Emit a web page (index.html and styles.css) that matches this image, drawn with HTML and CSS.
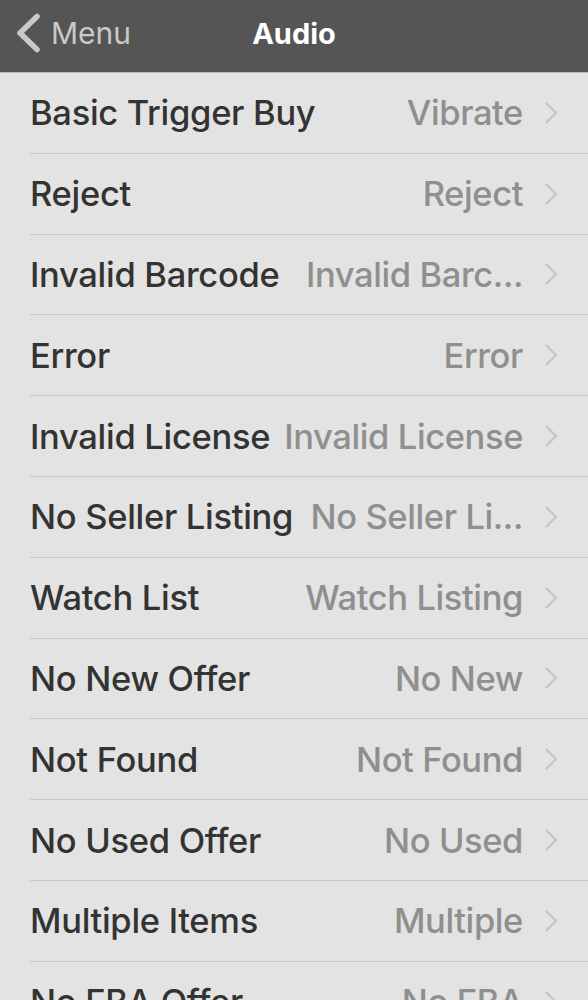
FILE: index.html
```html
<!DOCTYPE html>
<html lang="en">
<head>
    <meta charset="UTF-8">
    <meta name="viewport" content="width=device-width, initial-scale=1.0">
    <title>Audio</title>
    <link rel="stylesheet" href="styles.css">
</head>
<body>
    <div class="navbar">
        <a class="back" href="#">
            <svg class="back-icon" viewBox="0 0 26 40" width="26" height="40">
                <path d="M22 3.5 L5 20 L22 36.5" fill="none" stroke="currentColor" stroke-width="5.5" stroke-linecap="round" stroke-linejoin="round"/>
            </svg>
            <span>Menu</span>
        </a>
        <h1 class="title">Audio</h1>
    </div>

    <ul class="list">
        <li class="row"><span class="label">Basic Trigger Buy</span><span class="value">Vibrate</span><svg class="chevron" viewBox="0 0 14 22" width="14" height="22"><path d="M2 1 L12 11 L2 21" fill="none" stroke="currentColor" stroke-width="2"/></svg></li>
        <li class="row"><span class="label">Reject</span><span class="value">Reject</span><svg class="chevron" viewBox="0 0 14 22" width="14" height="22"><path d="M2 1 L12 11 L2 21" fill="none" stroke="currentColor" stroke-width="2"/></svg></li>
        <li class="row"><span class="label">Invalid Barcode</span><span class="value">Invalid Barc...</span><svg class="chevron" viewBox="0 0 14 22" width="14" height="22"><path d="M2 1 L12 11 L2 21" fill="none" stroke="currentColor" stroke-width="2"/></svg></li>
        <li class="row"><span class="label">Error</span><span class="value">Error</span><svg class="chevron" viewBox="0 0 14 22" width="14" height="22"><path d="M2 1 L12 11 L2 21" fill="none" stroke="currentColor" stroke-width="2"/></svg></li>
        <li class="row"><span class="label">Invalid License</span><span class="value">Invalid License</span><svg class="chevron" viewBox="0 0 14 22" width="14" height="22"><path d="M2 1 L12 11 L2 21" fill="none" stroke="currentColor" stroke-width="2"/></svg></li>
        <li class="row"><span class="label">No Seller Listing</span><span class="value">No Seller Li...</span><svg class="chevron" viewBox="0 0 14 22" width="14" height="22"><path d="M2 1 L12 11 L2 21" fill="none" stroke="currentColor" stroke-width="2"/></svg></li>
        <li class="row"><span class="label">Watch List</span><span class="value">Watch Listing</span><svg class="chevron" viewBox="0 0 14 22" width="14" height="22"><path d="M2 1 L12 11 L2 21" fill="none" stroke="currentColor" stroke-width="2"/></svg></li>
        <li class="row"><span class="label">No New Offer</span><span class="value">No New</span><svg class="chevron" viewBox="0 0 14 22" width="14" height="22"><path d="M2 1 L12 11 L2 21" fill="none" stroke="currentColor" stroke-width="2"/></svg></li>
        <li class="row"><span class="label">Not Found</span><span class="value">Not Found</span><svg class="chevron" viewBox="0 0 14 22" width="14" height="22"><path d="M2 1 L12 11 L2 21" fill="none" stroke="currentColor" stroke-width="2"/></svg></li>
        <li class="row"><span class="label">No Used Offer</span><span class="value">No Used</span><svg class="chevron" viewBox="0 0 14 22" width="14" height="22"><path d="M2 1 L12 11 L2 21" fill="none" stroke="currentColor" stroke-width="2"/></svg></li>
        <li class="row"><span class="label">Multiple Items</span><span class="value">Multiple</span><svg class="chevron" viewBox="0 0 14 22" width="14" height="22"><path d="M2 1 L12 11 L2 21" fill="none" stroke="currentColor" stroke-width="2"/></svg></li>
        <li class="row"><span class="label">No FBA Offer</span><span class="value">No FBA</span><svg class="chevron" viewBox="0 0 14 22" width="14" height="22"><path d="M2 1 L12 11 L2 21" fill="none" stroke="currentColor" stroke-width="2"/></svg></li>
    </ul>
</body>
</html>
```

FILE: styles.css
```css
* {
    margin: 0;
    padding: 0;
    box-sizing: border-box;
}

html, body {
    height: 100%;
    overflow: hidden;
}

body {
    font-family: Inter, "Noto Sans", "Liberation Sans", sans-serif;
    background: #e3e3e3;
}

.navbar {
    position: relative;
    height: 73px;
    padding-bottom: 6px;
    background: #555555;
    border-bottom: 1px solid #bdbdbd;
    display: flex;
    align-items: center;
    justify-content: center;
}

.back {
    position: absolute;
    left: 15px;
    top: 13px;
    display: flex;
    align-items: center;
    gap: 10px;
    color: #c9c9c9;
    text-decoration: none;
    font-size: 30px;
}

.back-icon {
    display: block;
}

.title {
    color: #ffffff;
    font-size: 29px;
    font-weight: 700;
}

.list {
    list-style: none;
}

.row {
    height: 80.8px;
    margin-left: 30px;
    padding-right: 30px;
    border-bottom: 1px solid #c9c9c9;
    display: flex;
    align-items: center;
    gap: 14px;
    font-size: 34.5px;
    letter-spacing: -0.3px;
}

.label {
    color: #333333;
    font-weight: 500;
    white-space: nowrap;
}

.value {
    margin-left: auto;
    color: #8f8f8f;
    font-weight: 450;
    letter-spacing: -0.4px;
    white-space: nowrap;
}

.chevron {
    display: block;
    flex-shrink: 0;
    margin-left: 7px;
    color: #c4c4c4;
}
```
